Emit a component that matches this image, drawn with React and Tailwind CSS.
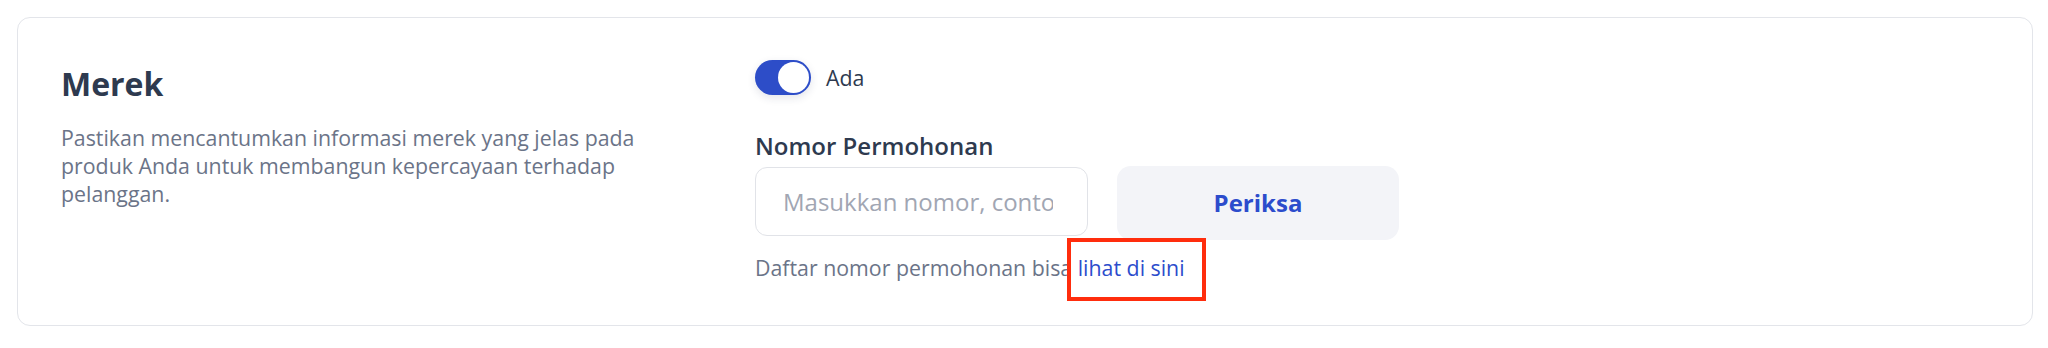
import React from "react";

export default function App() {
  return (
    <div className="w-[2048px] h-[348px] bg-white pl-[17px] pt-[17px]" style={{ fontFamily: '"Open Sans", "Noto Sans", sans-serif' }}>
      <div className="w-[2016px] h-[309px] rounded-[13px] border-[1.5px] border-[#e3e5ea] bg-white pl-[43px] pt-[42px] flex">
        {/* Left column */}
        <div className="w-[694px] shrink-0">
          <h2 className="text-[32px] leading-[48px] font-bold text-[#2e3a4f]">Merek</h2>
          <p className="mt-[16px] w-[600px] text-[21.33px] leading-[28px] text-[#6b7488]">
            Pastikan mencantumkan informasi merek yang jelas pada produk Anda untuk membangun kepercayaan terhadap pelanggan.
          </p>
        </div>
        {/* Right column */}
        <div className="flex flex-col">
          <div className="flex items-center gap-[15px] h-[35px]">
            <div className="relative w-[56px] h-[35px] rounded-full bg-[#2d4dc8] shadow-[0_3px_8px_rgba(30,40,80,0.12)]">
              <div className="absolute right-[2px] top-[2px] w-[31px] h-[31px] rounded-full bg-white"></div>
            </div>
            <span className="text-[21.33px] leading-[28px] text-[#2e3a4f]">Ada</span>
          </div>
          <div className="mt-[35px] text-[24px] leading-[32px] font-semibold text-[#2e3a4f]">Nomor Permohonan</div>
          <div className="mt-[5px] flex items-start gap-[29px]">
            <div className="w-[333px] h-[69px] rounded-[12px] border-[1.5px] border-[#e1e3e8] bg-white pl-[27px] pr-[34px] flex items-center overflow-hidden">
              <input
                className="w-full bg-transparent outline-none text-[24px] leading-[32px] text-[#2e3a4f] placeholder:text-[#a1a6b3]"
                style={{ fontFamily: '"Open Sans", "Noto Sans", sans-serif' }}
                placeholder="Masukkan nomor, contoh: D002019012345"
              />
            </div>
            <button
              className="w-[282px] h-[74px] -mt-[1px] rounded-[14px] bg-[#f3f4f8] text-[24px] font-bold text-[#2c4ccc] flex items-center justify-center"
              style={{ fontFamily: '"Open Sans", "Noto Sans", sans-serif' }}
            >
              Periksa
            </button>
          </div>
          <div className="mt-[14px] text-[21.33px] leading-[28px] text-[#6b7488] whitespace-nowrap">
            Daftar nomor permohonan bisa{" "}
            <span className="relative text-[#2c4ccc]">
              lihat di sini
              <span className="absolute left-[-11px] top-[-15px] w-[139px] h-[63px] border-4 border-[#ff2d0d]"></span>
            </span>
          </div>
        </div>
      </div>
    </div>
  );
}
